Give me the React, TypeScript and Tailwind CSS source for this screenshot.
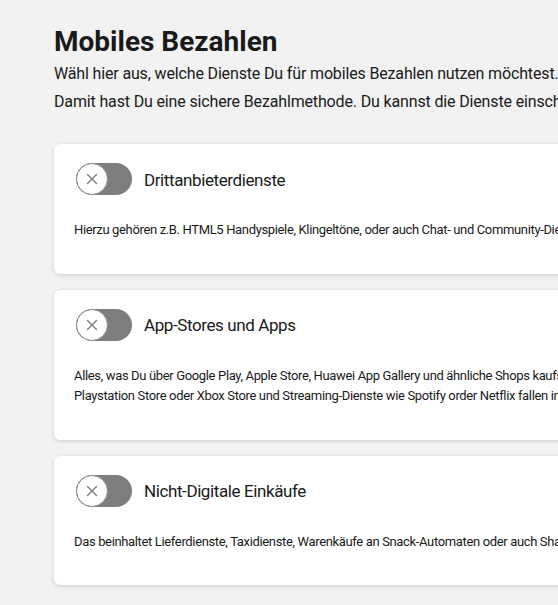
import React from "react";

const services = [
    {
        title: "Drittanbieterdienste",
        text: [
            "Hierzu gehören z.B. HTML5 Handyspiele, Klingeltöne, oder auch Chat- und Community-Dienste, die Du über Deine Mobilfunkrechnung bezahlst.",
        ],
    },
    {
        title: "App-Stores und Apps",
        text: [
            "Alles, was Du über Google Play, Apple Store, Huawei App Gallery und ähnliche Shops kaufst. Auch Käufe im",
            "Playstation Store oder Xbox Store und Streaming-Dienste wie Spotify order Netflix fallen in diese Kategorie.",
        ],
    },
    {
        title: "Nicht-Digitale Einkäufe",
        text: [
            "Das beinhaltet Lieferdienste, Taxidienste, Warenkäufe an Snack-Automaten oder auch Sharing-Dienste für Autos und Roller.",
        ],
    },
];

function Toggle() {
    return (
        <div className="relative h-8 w-14 shrink-0 rounded-full bg-[#7e7e7e]">
            <div className="absolute left-0 top-0 flex h-8 w-8 items-center justify-center rounded-full border border-[#8a8a8a] bg-white">
                <svg width="14" height="14" viewBox="0 0 14 14" fill="none" stroke="#7e7e7e" strokeWidth="1.4" strokeLinecap="round">
                    <path d="M2.5 2.5l9 9M11.5 2.5l-9 9" />
                </svg>
            </div>
        </div>
    );
}

export default function App() {
    return (
        <div className="min-h-[605px] overflow-hidden bg-[#f2f2f2] text-[#1a1a1a]" style={{ fontFamily: "Roboto, sans-serif" }}>
            <div className="w-[1000px] pl-[54px] pt-[25px]">
                <h1 className="text-[28px] font-bold leading-[34px]">Mobiles Bezahlen</h1>
                <p className="mt-[1px] text-[16px] leading-[28px] tracking-[-0.15px]">
                    Wähl hier aus, welche Dienste Du für mobiles Bezahlen nutzen möchtest.
                    <br />
                    Damit hast Du eine sichere Bezahlmethode. Du kannst die Dienste einschränken oder ganz sperren.
                </p>

                <div className="mt-[28px] flex flex-col gap-[16px]">
                    {services.map(s => (
                        <div key={s.title} className="rounded-md bg-white pb-[33px] pl-[20px] pt-[19px] shadow-[0_1px_4px_rgba(0,0,0,0.16)]">
                            <div className="flex items-center gap-3 pl-[2px]">
                                <Toggle />
                                <span className="pt-[3px] text-[17px] tracking-[-0.4px]">{s.title}</span>
                            </div>
                            <div className="mt-[25px] text-[13px] leading-[20.5px] tracking-[-0.35px]">
                                {s.text.map(t => (
                                    <div key={t} className="whitespace-nowrap">{t}</div>
                                ))}
                            </div>
                        </div>
                    ))}
                </div>
            </div>
        </div>
    );
}
